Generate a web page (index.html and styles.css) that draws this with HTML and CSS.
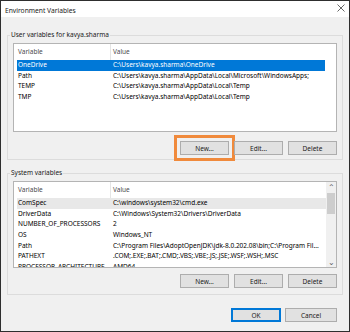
FILE: index.html
```html
<!DOCTYPE html>
<html lang="en">
<head>
    <meta charset="UTF-8">
    <title>Environment Variables</title>
    <link rel="stylesheet" href="styles.css">
</head>
<body>
    <div class="window">
        <div class="titlebar">
            <span class="title">Environment Variables</span>
            <svg class="close" width="8" height="8" viewBox="0 0 8 8">
                <path d="M0.5 0.5 L7.5 7.5 M7.5 0.5 L0.5 7.5" stroke="#555" stroke-width="0.9" fill="none"/>
            </svg>
        </div>

        <div class="content">
            <fieldset class="group group-user">
                <legend>User variables for kavya.sharma</legend>
                <div class="listbox listbox-user">
                    <div class="list">
                        <div class="row header">
                            <span class="cell">Variable</span>
                            <span class="cell">Value</span>
                        </div>
                        <div class="row selected">
                            <span class="cell">OneDrive</span>
                            <span class="cell">C:\Users\kavya.sharma\OneDrive</span>
                        </div>
                        <div class="row">
                            <span class="cell">Path</span>
                            <span class="cell">C:\Users\kavya.sharma\AppData\Local\Microsoft\WindowsApps;</span>
                        </div>
                        <div class="row">
                            <span class="cell">TEMP</span>
                            <span class="cell">C:\Users\kavya.sharma\AppData\Local\Temp</span>
                        </div>
                        <div class="row">
                            <span class="cell">TMP</span>
                            <span class="cell">C:\Users\kavya.sharma\AppData\Local\Temp</span>
                        </div>
                    </div>
                </div>
                <div class="buttons">
                    <button class="btn highlighted">New...</button>
                    <button class="btn">Edit...</button>
                    <button class="btn">Delete</button>
                </div>
            </fieldset>

            <fieldset class="group group-system">
                <legend>System variables</legend>
                <div class="listbox listbox-system">
                    <div class="list">
                        <div class="row header">
                            <span class="cell">Variable</span>
                            <span class="cell">Value</span>
                        </div>
                        <div class="row inactive">
                            <span class="cell">ComSpec</span>
                            <span class="cell">C:\windows\system32\cmd.exe</span>
                        </div>
                        <div class="row">
                            <span class="cell">DriverData</span>
                            <span class="cell">C:\Windows\System32\Drivers\DriverData</span>
                        </div>
                        <div class="row">
                            <span class="cell">NUMBER_OF_PROCESSORS</span>
                            <span class="cell">2</span>
                        </div>
                        <div class="row">
                            <span class="cell">OS</span>
                            <span class="cell">Windows_NT</span>
                        </div>
                        <div class="row">
                            <span class="cell">Path</span>
                            <span class="cell">C:\Program Files\AdoptOpenJDK\jdk-8.0.202.08\bin;C:\Program Fil...</span>
                        </div>
                        <div class="row">
                            <span class="cell">PATHEXT</span>
                            <span class="cell">.COM;.EXE;.BAT;.CMD;.VBS;.VBE;.JS;.JSE;.WSF;.WSH;.MSC</span>
                        </div>
                        <div class="row">
                            <span class="cell">PROCESSOR_ARCHITECTURE</span>
                            <span class="cell">AMD64</span>
                        </div>
                    </div>
                    <div class="scrollbar">
                        <span class="arrow">&#8963;</span>
                        <div class="track">
                            <div class="thumb"></div>
                        </div>
                        <span class="arrow">&#8964;</span>
                    </div>
                </div>
                <div class="buttons">
                    <button class="btn">New...</button>
                    <button class="btn">Edit...</button>
                    <button class="btn">Delete</button>
                </div>
            </fieldset>

            <div class="footer">
                <button class="btn default">OK</button>
                <button class="btn">Cancel</button>
            </div>
        </div>
    </div>
</body>
</html>
```

FILE: styles.css
```css
* {
    margin: 0;
    padding: 0;
    box-sizing: border-box;
}

body {
    font-family: 'Noto Sans', 'Open Sans', sans-serif;
    font-size: 6.5px;
    color: #000;
    background: #fff;
}

.window {
    width: 350px;
    height: 332px;
    border: 1px solid #2e2e2e;
    background: #f0f0f0;
    overflow: hidden;
}

.titlebar {
    height: 16px;
    background: #fff;
    display: flex;
    align-items: center;
    justify-content: space-between;
    padding: 0 4px 0 4px;
}

.title {
    color: #1a1a1a;
    font-size: 6.7px;
    margin-top: 2px;
}

.close {
    display: block;
    margin-top: -2px;
}

.content {
    padding: 0 6px;
}

/* group boxes */
.group {
    border: 1px solid #dcdcdc;
    padding: 3px 5px 4px;
}

.group legend {
    line-height: 10px;
    padding: 0 1px;
    margin-left: -3px;
    color: #1a1a1a;
}

.group-user {
    margin-top: 13px;
}

.group-system {
    margin-top: 8px;
    padding-bottom: 6px;
}

/* list views */
.listbox {
    background: #fff;
    border: 1px solid #b4b4b4;
    display: flex;
    overflow: hidden;
}

.listbox-user {
    height: 89px;
}

.listbox-system {
    height: 87px;
}

.list {
    flex: 1;
    min-width: 0;
}

.row {
    display: grid;
    grid-template-columns: 93px 1fr;
    height: 10.67px;
    line-height: 10.67px;
    margin-left: 3px;
    width: 308px;
    white-space: nowrap;
}

.listbox-system .row {
    width: auto;
}

.row .cell {
    padding-left: 1px;
    overflow: hidden;
}

.row .cell + .cell {
    padding-left: 3px;
}

.row.header {
    height: 16px;
    line-height: 16px;
    color: #4d4d4d;
}

.row.header .cell + .cell {
    border-left: 1px solid #e5e5e5;
    padding-left: 2px;
}

.row.selected {
    background: #0078d7;
    color: #fff;
}

.row.inactive {
    background: #e8e8e8;
}

.scrollbar {
    width: 10px;
    background: #f0f0f0;
    display: flex;
    flex-direction: column;
    align-items: center;
}

.arrow {
    height: 10px;
    line-height: 10px;
    font-size: 8px;
    color: #606060;
}

.track {
    flex: 1;
    width: 100%;
}

.thumb {
    height: 21px;
    margin: 1px 1px 0;
    background: #cdcdcd;
}

/* buttons */
.buttons {
    display: flex;
    justify-content: flex-end;
    gap: 5px;
    margin-top: 9px;
}

.group-system .buttons {
    margin-top: 6px;
}

.btn {
    width: 49px;
    height: 14px;
    font-family: inherit;
    font-size: 6.5px;
    color: #1a1a1a;
    background: #e1e1e1;
    border: 1px solid #adadad;
}

.btn.highlighted {
    outline: 3px solid #f08a3c;
    outline-offset: 3px;
}

.btn.default {
    width: 50px;
    border-color: #0078d7;
    box-shadow: inset 0 0 0 1px #0078d7;
}

.footer {
    display: flex;
    justify-content: flex-end;
    gap: 4px;
    margin-top: 13px;
    padding-right: 6px;
}

.footer .btn:last-child {
    width: 52px;
}
```
